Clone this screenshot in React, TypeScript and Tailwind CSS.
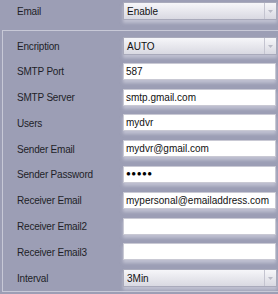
import React from "react";

type Row = { label: string; kind: "select" | "input"; value?: string; password?: boolean };

const rows: Row[] = [
  { label: "Encription", kind: "select", value: "AUTO" },
  { label: "SMTP Port", kind: "input", value: "587" },
  { label: "SMTP Server", kind: "input", value: "smtp.gmail.com" },
  { label: "Users", kind: "input", value: "mydvr" },
  { label: "Sender Email", kind: "input", value: "mydvr@gmail.com" },
  { label: "Sender Password", kind: "input", value: "●●●●●", password: true },
  { label: "Receiver Email", kind: "input", value: "mypersonal@emailaddress.com" },
  { label: "Receiver Email2", kind: "input", value: "" },
  { label: "Receiver Email3", kind: "input", value: "" },
  { label: "Interval", kind: "select", value: "3Min" },
];

function Select({ value }: { value: string }) {
  return (
    <div className="flex h-[18px] w-[154px] items-stretch border border-[#a9aabb] bg-gradient-to-b from-[#f6f6f9] to-[#d9d9e2] shadow-[0_3px_3px_rgba(220,220,232,0.55)]">
      <span className="flex flex-1 items-center pl-[3px] text-[10px] text-[#111]">{value}</span>
      <span className="flex w-[12px] items-center justify-center border-l border-[#c4c4d0]">
        <svg width="5" height="3" viewBox="0 0 5 3">
          <path d="M0 0h5L2.5 3z" fill="#b9bac6" />
        </svg>
      </span>
    </div>
  );
}

function Input({ value, password }: { value: string; password?: boolean }) {
  return (
    <div className="flex h-[17px] w-[153px] items-center border border-[#c9c9d4] bg-white pl-[2px] shadow-[0_3px_3px_rgba(220,220,232,0.55)]">
      <span className={password ? "text-[8px] tracking-[0.5px] text-black" : "text-[10px] text-[#111]"}>{value}</span>
    </div>
  );
}

function Label({ text }: { text: string }) {
  return <span className="w-[123px] shrink-0 pl-[17px] text-[10px] tracking-[-0.2px] text-[#1e1e28]">{text}</span>;
}

export default function App() {
  return (
    <div className="h-[294px] w-[278px] overflow-hidden bg-[#9c9eb5] font-['Liberation_Sans',Arial,sans-serif]">
      <div className="flex h-[30px] items-start pt-[2px]">
        <div className="flex h-[18px] items-center">
          <Label text="Email" />
        </div>
        <Select value="Enable" />
      </div>
      <div className="ml-[2px] h-[262px] border-l border-t border-b border-[#c8c9d7] pt-[6px]">
        {rows.map((r) => (
          <div key={r.label} className="-ml-[3px] flex h-[25.8px] items-start">
            <div className="flex h-[18px] items-center">
              <Label text={r.label} />
            </div>
            {r.kind === "select" ? <Select value={r.value ?? ""} /> : <Input value={r.value ?? ""} password={r.password} />}
          </div>
        ))}
      </div>
    </div>
  );
}
